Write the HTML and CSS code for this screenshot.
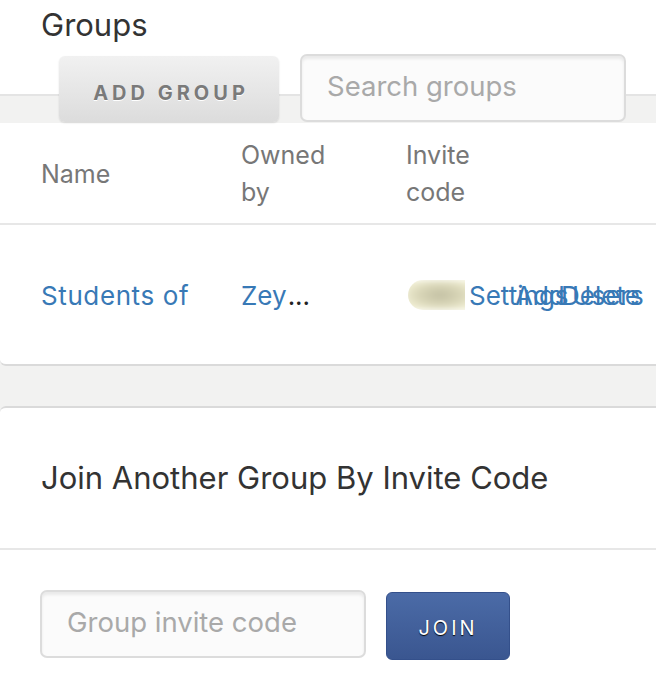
FILE: index.html
```html
<!DOCTYPE html>
<html lang="en">
<head>
<meta charset="utf-8">
<title>Groups</title>
<link rel="stylesheet" href="styles.css">
</head>
<body>
<header class="page-head">
  <h1 class="page-title">Groups</h1>
  <div class="toolbar">
    <button class="btn-add" type="button">ADD GROUP</button>
    <input class="field search" type="text" placeholder="Search groups">
  </div>
</header>

<section class="card groups-card">
  <div class="grid head-row">
    <div class="th">Name</div>
    <div class="th">Owned<br>by</div>
    <div class="th">Invite<br>code</div>
    <div class="th"></div>
  </div>
  <div class="grid data-row">
    <div class="td"><a class="link name-link" href="#">Students of</a></div>
    <div class="td"><a class="link" href="#">Zey</a><span class="ellipsis">...</span></div>
    <div class="td"><span class="code-wrap"><span class="code-blur"></span></span></div>
    <div class="td actions">
      <a class="link act" href="#">Settings</a>
      <a class="link act" href="#">Add Users</a>
      <a class="link act" href="#">Delete</a>
    </div>
  </div>
</section>

<section class="card join-card">
  <h2 class="join-title">Join Another Group By Invite Code</h2>
  <div class="join-body">
    <input class="field invite" type="text" placeholder="Group invite code">
    <button class="btn-join" type="button">JOIN</button>
  </div>
</section>
</body>
</html>
```

FILE: styles.css
```css
* { box-sizing: border-box; }

html, body {
  margin: 0;
  padding: 0;
}

body {
  background: #f2f2f1;
  font-family: "Inter", "Liberation Sans", sans-serif;
  overflow: hidden;
}

.page-head {
  background: linear-gradient(#ffffff 0, #ffffff 94px, #e4e4e4 94px, #e4e4e4 96px, #f2f2f1 96px);
  height: 123px;
  padding: 0 0 0 41px;
}

.page-title {
  margin: 0;
  padding-top: 6px;
  font-size: 31px;
  line-height: 37px;
  font-weight: 400;
  color: #333;
}

.toolbar {
  display: flex;
  align-items: flex-end;
  margin-left: 18px;
  margin-top: 11px;
  gap: 21px;
}

.btn-add {
  width: 220px;
  height: 66px;
  border: none;
  border-radius: 6px;
  background: linear-gradient(#f1f1f1, #dcdcdc);
  box-shadow: 0 1px 2px rgba(0,0,0,0.12);
  font-family: inherit;
  font-size: 20px;
  font-weight: 700;
  letter-spacing: 4px;
  color: #7a7a7a;
  text-shadow: 0 1px 0 #fff;
  padding: 8px 0 0 4px;
}

.field {
  height: 68px;
  border: 2px solid #dcdcdc;
  border-radius: 7px;
  background: #fbfbfb;
  box-shadow: inset 0 3px 3px rgba(0,0,0,0.07);
  font-family: inherit;
  font-size: 27.5px;
  color: #555;
  padding: 0 0 4px 25px;
  outline: none;
}

.field::placeholder {
  color: #a9a9a9;
}

.search {
  width: 326px;
}

.card {
  background: #fff;
}

.groups-card {
  border-bottom: 2px solid #dadada;
  border-radius: 0 0 0 6px;
}

.grid {
  display: grid;
  grid-template-columns: 200px 165px 63px 1fr;
  padding-left: 41px;
  align-items: center;
}

.head-row {
  height: 102px;
  border-bottom: 2px solid #e7e7e7;
  padding-top: 2px;
}

.th {
  font-size: 25px;
  line-height: 37px;
  color: #777;
}

.data-row {
  height: 139px;
  padding-top: 1px;
}

.td {
  font-size: 26px;
  line-height: 37px;
  white-space: nowrap;
}

.link {
  color: #3879b6;
  text-decoration: none;
}

.name-link {
  letter-spacing: 0.6px;
}

.ellipsis {
  color: #222;
  margin-left: 1px;
}

.code-wrap {
  display: block;
  width: 57px;
  height: 30px;
  margin-left: 2px;
  overflow: hidden;
  border-radius: 15px 0 0 15px;
}

.code-blur {
  display: block;
  width: 70px;
  height: 30px;
  background: radial-gradient(ellipse at 50% 50%, #c2bfa2 0%, #d9d6b8 45%, #f3f1d6 80%);
  filter: blur(3px);
  margin-left: -3px;
}

.actions {
  display: flex;
}

.act {
  display: block;
  width: 46px;
  overflow: visible;
}

.join-card {
  margin-top: 40px;
  border-top: 2px solid #dadada;
  border-radius: 6px 0 0 0;
  height: 300px;
}

.join-title {
  margin: 0;
  height: 142px;
  border-bottom: 2px solid #e7e7e7;
  display: flex;
  align-items: center;
  padding: 0 0 2px 41px;
  font-size: 31px;
  font-weight: 400;
  color: #333;
}

.join-body {
  display: flex;
  align-items: flex-start;
  gap: 20px;
  padding: 40px 0 0 40px;
}

.invite {
  width: 326px;
}

.btn-join {
  margin-top: 2px;
  width: 124px;
  height: 68px;
  border: 1px solid #34508b;
  border-radius: 6px;
  background: linear-gradient(#4b6ba7, #3a5690);
  font-family: inherit;
  font-size: 20px;
  letter-spacing: 3px;
  color: #fff;
  text-shadow: 0 1px 1px #000;
  padding: 4px 0 0 0;
}
```
